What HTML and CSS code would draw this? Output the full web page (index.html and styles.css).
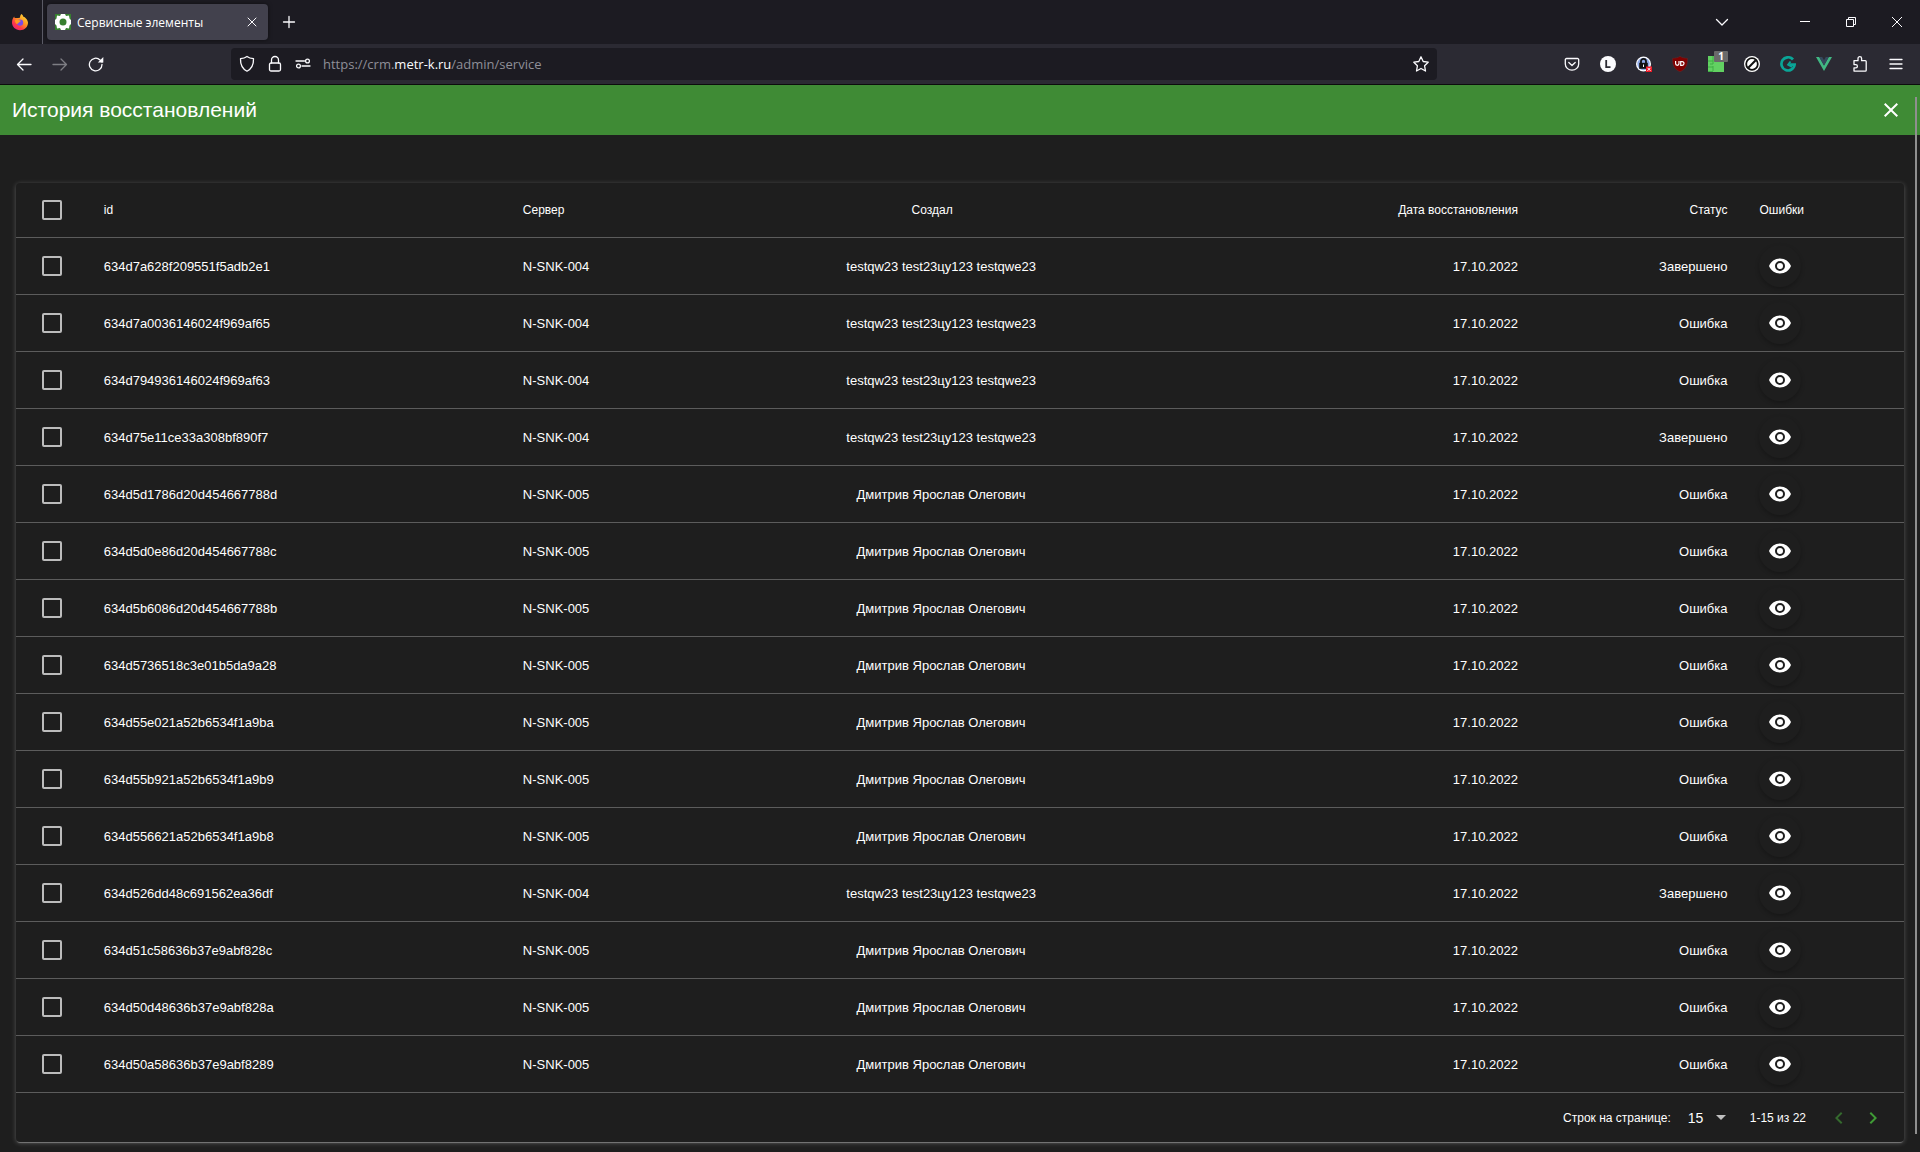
FILE: index.html
```html
<!DOCTYPE html>
<html lang="ru">
<head>
    <meta charset="utf-8">
    <title>Сервисные элементы</title>
    <link rel="stylesheet" href="styles.css">
</head>
<body>
    <header class="browser">
        <div class="tabs">
            <div class="fx">
                <svg width="18" height="18" viewBox="0 0 18 18">
                    <defs>
                        <linearGradient id="flame" x1="1" y1="0" x2="0.2" y2="1">
                            <stop offset="0" stop-color="#fff04a"/>
                            <stop offset="0.45" stop-color="#ff9a1f"/>
                            <stop offset="0.75" stop-color="#ff3a47"/>
                            <stop offset="1" stop-color="#e81e7e"/>
                        </linearGradient>
                    </defs>
                    <path fill="url(#flame)" d="M10.500 1c1 1 1.600 1.700 1.900 2.700C14 4 16.800 6.500 17 9.500c.1 4.500-3.500 7.700-8 7.700S1 14 1 9.600C1 7 2 5 3.200 3.600c.1.700.2 1.100.5 1.500.6-.3 1.500-.3 2.300 0C7.500 5.100 8 4.600 9 4.800c0-1.500.4-2.900 1.500-3.800z"/>
                    <circle cx="9" cy="9.600" r="3.200" fill="#7a4be8"/>
                    <path fill="#ff9a1f" d="M4 7c1.500-.9 3-.6 4 .2 1 .2 1.600.2 1.800.7-.2.800-1.500.9-2 1.600-.2.900-1.300 1-1.800 1.400C4.500 10.500 4 9 4 7z"/>
                </svg>
            </div>
            <div class="tab">
                <svg width="16" height="16" viewBox="0 0 16 16">
                    <rect width="16" height="16" fill="#37802f"/>
                    <path fill="#fff" d="M6 0h4l1 2 3-.5.5 3L16 6v4l-1.500 1.500-.5 3-3-.5-1 2H6l-1-2-3 .5-.5-3L0 10V6l1.500-1.500.5-3 3 .5z"/>
                    <circle cx="8" cy="8" r="3.500" fill="#37802f"/>
                    <path fill="#37802f" d="M0 0h3L0 3zM13 0h3v3zM0 13l3 3H0zM16 13v3h-3z"/>
                </svg>
                <span class="tab-title">Сервисные элементы</span>
                <button class="tab-close" aria-label="Закрыть вкладку">
                    <svg width="10" height="10" viewBox="0 0 10 10" class="line"><path d="M1 1l8 8M9 1l-8 8"/></svg>
                </button>
            </div>
            <button class="tool" aria-label="Новая вкладка">
                <svg width="14" height="14" viewBox="0 0 14 14" class="line"><path d="M7 1.500v11M1.500 7h11"/></svg>
            </button>
            <button class="tool all-tabs" aria-label="Все вкладки">
                <svg width="14" height="14" viewBox="0 0 14 14" class="line"><path d="M1.500 4.500L7 10l5.500-5.500"/></svg>
            </button>
            <div class="win">
                <button aria-label="Свернуть"><svg width="10" height="10" viewBox="0 0 10 10"><path fill="#fff" d="M0 4h10v1H0z"/></svg></button>
                <button aria-label="Окно"><svg width="10" height="10" viewBox="0 0 10 10" class="line thin"><path d="M.5 2.500h7v7h-7zM2.500 2.500v-2h7v7h-2"/></svg></button>
                <button aria-label="Закрыть"><svg width="10" height="10" viewBox="0 0 10 10" class="line thin"><path d="M0 0l10 10M10 0L0 10"/></svg></button>
            </div>
        </div>
        <nav class="nav">
            <button class="tool" aria-label="Назад"><svg width="16" height="16" viewBox="0 0 16 16" class="line"><path d="M15 8.500H1.500M7 3L1.500 8.500 7 14"/></svg></button>
            <button class="tool dim" aria-label="Вперёд"><svg width="16" height="16" viewBox="0 0 16 16" class="line"><path d="M1 8.500h13.500M9 3l5.500 5.500L9 14"/></svg></button>
            <button class="tool" aria-label="Обновить"><svg width="16" height="16" viewBox="0 0 16 16" class="line"><path d="M14 8.500a6.300 6.300 0 1 1-2-4.600L14 6"/><path fill="#fbfbfe" stroke="none" d="M15.300 1v5.500H9.800z"/></svg></button>
            <div class="url">
                <svg width="16" height="18" viewBox="0 0 16 18" class="line"><path d="M8 1.500c2 1.500 4.200 2 6.500 2.200.2 5.600-1.800 10-6.500 12.500C3.300 13.700 1.300 9.300 1.500 3.700 3.800 3.500 6 3 8 1.500z"/></svg>
                <svg width="16" height="18" viewBox="0 0 16 18" class="line"><rect x="2.500" y="8" width="11" height="8" rx="1.500"/><path d="M4.500 8V5a3.500 3.500 0 0 1 7 0v3"/></svg>
                <svg width="16" height="18" viewBox="0 0 16 18" class="line"><path d="M1 6h8.500M7 11h8"/><circle cx="12.500" cy="6" r="1.900"/><circle cx="3.500" cy="11" r="1.900"/></svg>
                <a class="address" href="#">https://crm.<b>metr-k.ru</b>/admin/service</a>
                <svg width="18" height="18" viewBox="0 0 18 18" class="line"><path d="M9 1.800l2.200 4.700 5 .7-3.600 3.600.9 5.200L9 13.500 4.500 16l.9-5.200L1.800 7.200l5-.7z"/></svg>
            </div>
            <button class="tool" aria-label="Pocket"><svg width="16" height="16" viewBox="0 0 16 16" class="line"><path d="M2.500 2.500h11a1.200 1.200 0 0 1 1.200 1.200V8a6.700 6.200 0 0 1-13.400 0V3.700a1.200 1.200 0 0 1 1.200-1.200zM4.800 6.500L8 9.500l3.200-3"/></svg></button>
            <button class="tool" aria-label="L"><svg width="16" height="16" viewBox="0 0 16 16"><circle cx="8" cy="8" r="8" fill="#fbfbfe"/><path stroke="#2b2a33" stroke-width="1.800" fill="none" d="M6.200 4v7.200h4.300"/></svg></button>
            <button class="tool" aria-label="Замок"><svg width="16" height="16" viewBox="0 0 16 16"><circle cx="7.500" cy="8" r="7.500" fill="#fff"/><circle cx="7.500" cy="8" r="6.200" fill="#8fa9e6"/><path fill="none" stroke="#111" stroke-width="1.800" d="M5 7.500V5.300a2.500 2.500 0 0 1 5 0v2.200"/><path fill="#111" d="M3.200 6.800h8.600v6H3.200z"/><path fill="#fff" d="M7 8.500h1v2.500H7z"/><path fill="#f01825" d="M10 10.500h6V16h-6z"/><path stroke="#fff" d="M11.500 11.800l3 3m0-3l-3 3"/></svg></button>
            <button class="tool" aria-label="uBlock"><svg width="16" height="16" viewBox="0 0 16 16"><path fill="#800000" stroke="#5a2a2e" stroke-width=".6" d="M8 .3c2 1.400 4.800 1.900 7.600 2C15.600 9 14.200 13 8 15.800 1.800 13 .4 9 .4 2.300 3.200 2.200 6 1.700 8 .3z"/><path fill="none" stroke="#fff" stroke-width="1.200" d="M3.600 5v2.600a1.700 1.700 0 0 0 3.400 0V5M8.700 5.600h1.400a1.900 1.900 0 0 1 0 3.800H8.700z"/></svg></button>
            <button class="tool has-badge" aria-label="Счётчик"><svg width="16" height="16" viewBox="0 0 16 16"><path fill="#62d162" d="M0 0h16v16H0z"/><path fill="none" stroke="#3fae45" d="M0 5h5V0M5 5v3H2M0 11h5v4M5 11v-1M0 15.500h5"/></svg><span class="badge">1</span></button>
            <button class="tool" aria-label="Блокировка"><svg width="16" height="16" viewBox="0 0 16 16"><circle cx="8" cy="8" r="8" fill="#fff"/><circle cx="8" cy="8" r="5.800" fill="none" stroke="#111" stroke-width="1.800"/><path stroke="#111" stroke-width="2" d="M4.300 11.700l7.400-7.400"/></svg></button>
            <button class="tool" aria-label="Grammarly"><svg width="16" height="16" viewBox="0 0 16 16"><path fill="none" stroke="#0aa597" stroke-width="2.700" d="M13 3.500A6.600 6.600 0 1 0 14.600 8.700H9.200"/><path fill="none" stroke="#0aa597" stroke-width="1.800" d="M10.500 5.500L8 8.700l4 2.300"/></svg></button>
            <button class="tool" aria-label="Vue"><svg width="16" height="16" viewBox="0 0 16 16"><path fill="#41b883" d="M0 1h3.200L8 9.500 12.800 1H16L8 15z"/><path fill="#35495e" d="M3.200 1h3L8 4.200 9.800 1h3L8 9.500z"/></svg></button>
            <button class="tool" aria-label="Расширения"><svg width="16" height="18" viewBox="0 0 16 18" class="line"><path d="M2 7.500V5.700h4V3.500a1.800 1.800 0 0 1 3.600 0v2.200h3.700a.9.9 0 0 1 .9.900v8.600a.9.9 0 0 1-.9.900H2v-3.300h1.800a1.600 1.600 0 0 0 0-3.200H2z"/></svg></button>
            <button class="tool" aria-label="Меню"><svg width="14" height="14" viewBox="0 0 14 14" class="line"><path d="M1 2.500h12M1 7h12M1 11.500h12"/></svg></button>
        </nav>
    </header>

    <main class="page">
        <div class="dialog-bar">
            <h1>История восстановлений</h1>
            <button class="dialog-close" aria-label="Закрыть окно">
                <svg width="24" height="24" viewBox="0 0 24 24"><path fill="#fff" d="M19 6.400L17.600 5 12 10.600 6.400 5 5 6.400l5.600 5.600L5 17.600 6.400 19l5.600-5.600 5.600 5.600 1.400-1.400-5.600-5.600z"/></svg>
            </button>
        </div>

        <section class="card">
            <table>
                <thead>
                    <tr>
                        <th class="c-check"><input type="checkbox" aria-label="Выбрать все"></th>
                        <th class="c-id">id</th>
                        <th class="c-server">Сервер</th>
                        <th class="c-user">Создал</th>
                        <th class="c-date">Дата восстановления</th>
                        <th class="c-status">Статус</th>
                        <th class="c-err">Ошибки</th>
                    </tr>
                </thead>
                <tbody id="rows"></tbody>
            </table>
            <div class="pager">
                <label for="perPage">Строк на странице:</label>
                <div class="per-page">
                    <select id="perPage">
                        <option>5</option>
                        <option>10</option>
                        <option selected>15</option>
                    </select>
                    <svg width="10" height="5" viewBox="0 0 10 5"><path fill="#c0c0c0" d="M0 0h10L5 5z"/></svg>
                </div>
                <span class="range">1-15 из 22</span>
                <button class="page-btn" disabled aria-label="Предыдущая страница"><svg width="24" height="24" viewBox="0 0 24 24"><path fill="#3f8b35" d="M15.400 16.600L10.800 12l4.600-4.600L14 6l-6 6 6 6z"/></svg></button>
                <button class="page-btn" aria-label="Следующая страница"><svg width="24" height="24" viewBox="0 0 24 24"><path fill="#3f9b35" d="M8.600 16.600l4.600-4.600-4.600-4.600L10 6l6 6-6 6z"/></svg></button>
            </div>
        </section>
        <div class="scroll-thumb"></div>
    </main>
    <script src="script.js"></script>
</body>
</html>
```
FILE: styles.css
```css
* {
    box-sizing: border-box;
}

body {
    margin: 0;
    min-height: 100vh;
    background: #1e1e1e;
    color: #fff;
    font-family: "Liberation Sans", Arial, sans-serif;
    font-size: 13px;
}

button {
    padding: 0;
    border: 0;
    background: none;
    color: inherit;
    display: flex;
    align-items: center;
    justify-content: center;
    cursor: pointer;
}

svg {
    display: block;
    flex: none;
}

.line {
    fill: none;
    stroke: #fbfbfe;
    stroke-width: 1.3;
    stroke-linecap: round;
    stroke-linejoin: round;
}

.thin {
    stroke-width: 1;
    stroke-linecap: butt;
    stroke-linejoin: miter;
}

/* browser frame */
.browser {
    font-family: "Open Sans", "Noto Sans", sans-serif;
}

.tabs {
    display: flex;
    align-items: center;
    height: 44px;
    background: #1c1b22;
}

.fx {
    display: flex;
    align-items: center;
    height: 44px;
    padding: 0 13px 0 11px;
    margin-right: 4px;
    border-right: 1px solid #5b5b66;
}

.tab {
    display: flex;
    align-items: center;
    gap: 6px;
    width: 221px;
    height: 36px;
    padding: 0 6px 0 8px;
    border-radius: 4px;
    background: #42414d;
    box-shadow: 0 0 4px rgba(0, 0, 0, 0.5);
}

.tab-title {
    flex: 1;
    font-size: 12px;
    white-space: nowrap;
}

.tab-close {
    width: 20px;
    height: 20px;
}

.tab-close .line {
    stroke-width: 1;
}

.tool {
    width: 36px;
    height: 32px;
}

.tab + .tool {
    margin-left: 3px;
}

.all-tabs {
    margin-left: auto;
}

.win {
    display: flex;
    margin-left: 42px;
}

.win button {
    width: 46px;
    height: 44px;
}

.nav {
    display: flex;
    align-items: center;
    height: 41px;
    padding: 0 6px;
    background: #2b2a33;
    border-bottom: 1px solid #0c0c0d;
}

.dim {
    opacity: 0.4;
}

.url {
    display: flex;
    flex: 1;
    align-items: center;
    gap: 12px;
    height: 32px;
    margin: 0 117px;
    padding: 0 7px 0 8px;
    border-radius: 4px;
    background: #1c1b22;
}

.address {
    flex: 1;
    color: #8f8f98;
    font-size: 13px;
    text-decoration: none;
}

.address b {
    color: #fbfbfe;
    font-weight: normal;
}

.has-badge {
    position: relative;
}

.badge {
    position: absolute;
    top: 3px;
    right: 6px;
    width: 14px;
    height: 11px;
    border-radius: 1px;
    background: #6a6a6a;
    font: bold 10px/11px "Open Sans", sans-serif;
}

/* dialog */
.page {
    position: relative;
}

.dialog-bar {
    display: flex;
    align-items: center;
    justify-content: space-between;
    height: 50px;
    padding: 0 17px 0 12px;
    background: #3f8b35;
}

h1 {
    margin: 0;
    font-size: 21px;
    font-weight: normal;
}

.card {
    margin: 48px 16px 9px;
    border-radius: 4px;
    background: #1e1e1e;
    box-shadow: 0 2px 1px -1px rgba(255, 255, 255, 0.3), 0 1px 5px rgba(255, 255, 255, 0.25);
}

table {
    width: 100%;
    table-layout: fixed;
    border-collapse: separate;
    border-spacing: 0;
}

th, td {
    height: 57px;
    padding: 0 16px;
    border-bottom: 1px solid #5c5c5c;
    text-align: left;
    white-space: nowrap;
}

th {
    height: 55px;
    font-size: 12px;
    font-weight: normal;
}

.c-check { width: 3.8%; padding: 0 0 0 26px; }
.c-id { width: 22.2%; }
.c-server { width: 12.6%; }
.c-user { width: 20.8%; text-align: center; }
.c-date { width: 21%; text-align: right; }
.c-status { width: 11.1%; text-align: right; }
.c-err { width: 8.5%; }

th.c-user {
    padding-right: 34px;
}

input[type="checkbox"] {
    display: block;
    appearance: none;
    width: 20px;
    height: 20px;
    margin: 0;
    border: 2px solid #bcbcbc;
    border-radius: 2px;
}

.eye {
    width: 42px;
    height: 42px;
    border-radius: 50%;
    box-shadow: 0 2px 4px rgba(0, 0, 0, 0.25);
}

.pager {
    display: flex;
    align-items: center;
    justify-content: flex-end;
    height: 49px;
    padding-right: 14px;
    font-size: 12px;
}

.per-page {
    display: flex;
    align-items: center;
    margin: 0 24px 0 17px;
}

select {
    width: 28px;
    padding: 0;
    border: 0;
    appearance: none;
    background: none;
    color: #fff;
    font: 14px "Liberation Sans", Arial, sans-serif;
}

.range {
    margin-right: 16px;
}

.page-btn {
    width: 34px;
    height: 34px;
}

.page-btn:disabled {
    opacity: 0.7;
}

.scroll-thumb {
    position: absolute;
    top: 12px;
    right: 3px;
    bottom: 8px;
    width: 2px;
    background: #8f8f8f;
}
```
FILE: script.js
```js
const user1 = "testqw23 test23цу123 testqwe23";
const user2 = "Дмитрив Ярослав Олегович";

const restores = [
    ["634d7a628f209551f5adb2e1", "N-SNK-004", user1, "Завершено"],
    ["634d7a0036146024f969af65", "N-SNK-004", user1, "Ошибка"],
    ["634d794936146024f969af63", "N-SNK-004", user1, "Ошибка"],
    ["634d75e11ce33a308bf890f7", "N-SNK-004", user1, "Завершено"],
    ["634d5d1786d20d454667788d", "N-SNK-005", user2, "Ошибка"],
    ["634d5d0e86d20d454667788c", "N-SNK-005", user2, "Ошибка"],
    ["634d5b6086d20d454667788b", "N-SNK-005", user2, "Ошибка"],
    ["634d5736518c3e01b5da9a28", "N-SNK-005", user2, "Ошибка"],
    ["634d55e021a52b6534f1a9ba", "N-SNK-005", user2, "Ошибка"],
    ["634d55b921a52b6534f1a9b9", "N-SNK-005", user2, "Ошибка"],
    ["634d556621a52b6534f1a9b8", "N-SNK-005", user2, "Ошибка"],
    ["634d526dd48c691562ea36df", "N-SNK-004", user1, "Завершено"],
    ["634d51c58636b37e9abf828c", "N-SNK-005", user2, "Ошибка"],
    ["634d50d48636b37e9abf828a", "N-SNK-005", user2, "Ошибка"],
    ["634d50a58636b37e9abf8289", "N-SNK-005", user2, "Ошибка"]
];

const eye = '<svg width="24" height="24" viewBox="0 0 24 24"><path fill="#fff" d="M12 9a3 3 0 0 0-3 3 3 3 0 0 0 3 3 3 3 0 0 0 3-3 3 3 0 0 0-3-3m0 8a5 5 0 0 1-5-5 5 5 0 0 1 5-5 5 5 0 0 1 5 5 5 5 0 0 1-5 5m0-12.500C7 4.500 2.730 7.610 1 12c1.730 4.390 6 7.500 11 7.500s9.270-3.110 11-7.500c-1.730-4.390-6-7.500-11-7.500z"/></svg>';

document.getElementById("rows").innerHTML = restores.map(([id, server, user, status]) => `
    <tr>
        <td class="c-check"><input type="checkbox" aria-label="${id}"></td>
        <td class="c-id">${id}</td>
        <td class="c-server">${server}</td>
        <td class="c-user">${user}</td>
        <td class="c-date">17.10.2022</td>
        <td class="c-status">${status}</td>
        <td class="c-err"><button class="eye" aria-label="Показать ошибки">${eye}</button></td>
    </tr>`).join("");
```
